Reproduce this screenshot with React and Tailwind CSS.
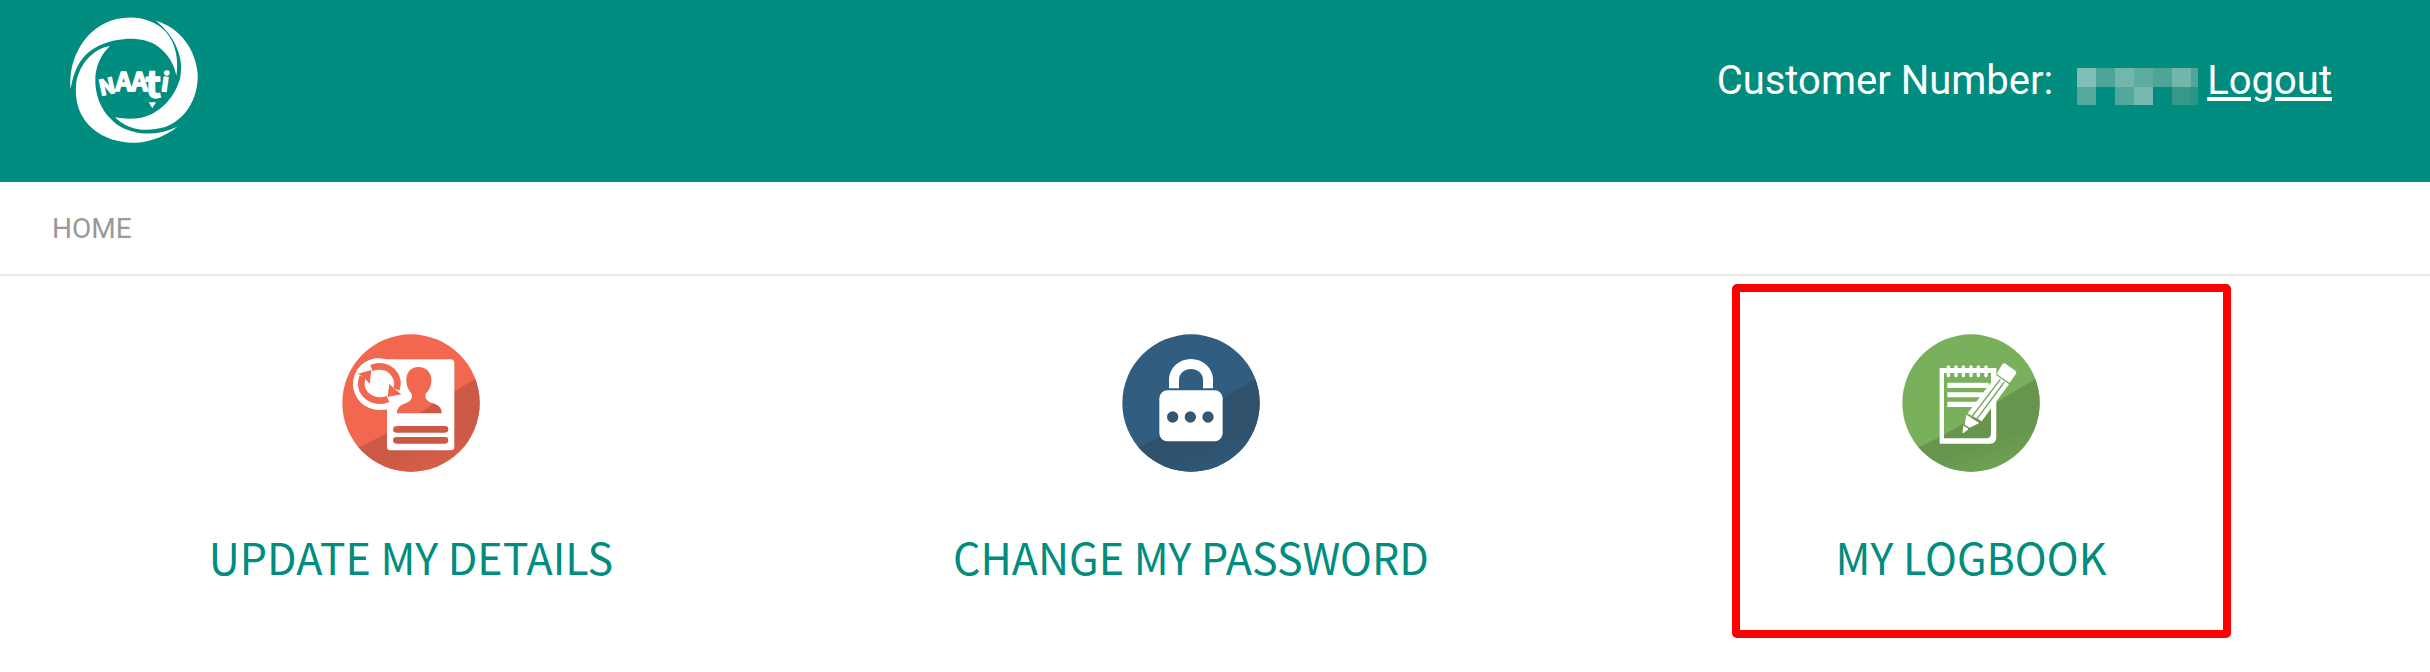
function Logo() {
  return (
    <svg viewBox="0 0 510 510" className="size-[170px]" role="img" aria-label="NAATI" fill="#fff">
      <path d="M62 268C54 190 92 108 160 72C222 40 302 48 346 94C380 132 386 184 379 228C374 196 356 164 326 141C298 120 262 115 226 117C180 121 138 134 106 166C78 196 68 232 62 268Z" />
      <path d="M318 62C392 84 438 150 443 222C446 300 402 362 342 382C304 393 262 391 238 380C220 373 206 364 195 352C222 357 250 357 274 353C330 340 374 292 390 236C404 172 374 108 318 62Z" />
      <path d="M180 138C130 146 90 190 79 246C72 302 88 354 130 388C166 418 214 430 258 428C306 425 350 406 382 380C340 400 292 406 254 396C222 388 200 376 186 360C152 330 134 284 136 232C138 196 154 162 180 138Z" />
      <g
        fontFamily="'Noto Sans CJK SC', sans-serif"
        fontWeight="700"
        textAnchor="middle"
        stroke="#fff"
        strokeWidth="4"
      >
        <text x="176" y="282" fontSize="64" transform="rotate(-12 176 282)">N</text>
        <text x="221" y="272" fontSize="78">A</text>
        <text x="268" y="272" fontSize="78">A</text>
        <text x="309" y="294" fontSize="112">t</text>
        <text x="342" y="274" fontSize="76" transform="rotate(8 342 274)">i</text>
      </g>
      <path d="M296 307L318 307L307 325Z" />
    </svg>
  );
}

function Disc({ id, base, shade, end, children }) {
  return (
    <svg viewBox="36 26 414 414" className="size-[138px]" aria-hidden="true">
      <defs>
        <clipPath id={id}>
          <circle cx="243" cy="233" r="206" />
        </clipPath>
        <linearGradient id={id + "-g"} x1="0" y1="0" x2="0.45" y2="1">
          <stop offset="0.75" stopColor={shade} />
          <stop offset="1" stopColor={end} />
        </linearGradient>
      </defs>
      <circle cx="243" cy="233" r="206" fill={base} />
      <path
        clipPath={`url(#${id})`}
        d="M70 373Q160 333 243 280Q330 222 460 147V460H70Z"
        fill={`url(#${id}-g)`}
      />
      {children}
    </svg>
  );
}

function DetailsIcon() {
  return (
    <Disc id="details" base="#f1674f" shade="#cb5945" end="#d85f49">
      <path
        fillRule="evenodd"
        fill="#fff"
        d="M150 102H362Q373 102 373 113V365Q373 375 362 375H181Q171 375 171 365V253H146A77 77 0 0 1 146 99ZM265 125C242 125 229 142 229 164C229 182 236 196 245 205C248 222 240 228 228 233C208 240 200 250 201 264H335C336 250 328 240 308 233C292 228 284 220 287 205C297 196 304 182 304 164C304 142 290 125 265 125ZM199 302A10 10 0 0 0 199 322H345A10 10 0 0 0 345 302ZM199 335A10 10 0 0 0 199 355H345A10 10 0 0 0 345 335Z"
      />
      <circle cx="147" cy="176" r="77" fill="#fff" />
      <g fill="none" stroke="#f1674f" strokeWidth="20">
        <path d="M124 128C150 118 178 124 193 146C203 160 204 178 199 192" />
        <path d="M174 221C148 232 118 224 103 203C92 188 92 170 98 154" />
      </g>
      <path d="M84 145L124 134L119 176L104 158Z" fill="#f1674f" />
      <path d="M214 207L173 215L178 176L193 190Z" fill="#f1674f" />
    </Disc>
  );
}

function LockIcon() {
  return (
    <Disc id="lock" base="#315d80" shade="#2f516c" end="#30587a">
      <path d="M177 189V163A66 62 0 0 1 309 163V189H279V163A36 32 0 0 0 207 163V189Z" fill="#fff" />
      <rect x="148" y="195" width="190" height="153" rx="24" fill="#fff" />
      <g fill="#315775">
        <circle cx="188" cy="275" r="17" />
        <circle cx="241" cy="275" r="17" />
        <circle cx="294" cy="275" r="17" />
      </g>
    </Disc>
  );
}

function LogbookIcon() {
  return (
    <Disc id="logbook" base="#78b05b" shade="#67954d" end="#6fa354">
      <path
        fillRule="evenodd"
        fill="#fff"
        d="M149 128H319V336Q319 355 300 355H149ZM162 143V339H289Q303 339 303 324V143Z"
      />
      <g stroke="#fff" strokeWidth="10" strokeLinecap="round">
        <path d="M175 125V151M198 125V151M220 125V151M243 125V151M265 125V151M288 125V151" />
      </g>
      <path d="M172 172H296V188H172ZM172 201H280V216H172ZM172 229H262V245H172Z" fill="#fff" />
      <path d="M338 115Q342 112 347 115L376 136Q381 140 378 145L359 172L324 149Q320 146 322 141Z" fill="#fff" />
      <path d="M319 150L357 177L275 288L233 264Z" fill="#fff" />
      <path d="M331 162L245 275M343 170L259 283" stroke="#78a45f" strokeWidth="4" />
      <path d="M229 268L268 293L239 307L224 298Z" fill="#fff" />
      <path d="M221 303L234 311L219 323Z" fill="#fff" stroke="#fff" strokeWidth="3" />
    </Disc>
  );
}

const mosaic = [
  ["bg-[#80beb6]", "bg-[#52a99c]"],
  ["bg-[#4da599]", "bg-transparent"],
  ["bg-[#73b7ac]", "bg-[#52a89b]"],
  ["bg-[#5eada1]", "bg-[#76baaf]"],
  ["bg-[#4da598]", "bg-transparent"],
  ["bg-[#72b6ab]", "bg-[#35998a]"],
];

function RedactedNumber() {
  return (
    <span className="flex" role="img" aria-label="Hidden customer number">
      {mosaic.map(([top, bottom], i) => (
        <span key={i} className="flex flex-col">
          <span className={`h-[19px] w-[19px] ${top}`} />
          <span className={`h-[18px] w-[19px] ${bottom}`} />
        </span>
      ))}
      <span className="flex flex-col">
        <span className="h-[19px] w-[7px] bg-[#4ea598]" />
        <span className="h-[18px] w-[7px] bg-[#2c9485]" />
      </span>
    </span>
  );
}

function Tile({ icon, label, highlighted }) {
  return (
    <li className="relative flex flex-1 flex-col items-center">
      <a href="#" className="flex flex-col items-center gap-[52px] pt-[58px]">
        {icon}
        <span className="text-[43px] leading-[64px] text-[#008c7e]">{label}</span>
      </a>
      {highlighted && (
        <span className="pointer-events-none absolute top-2 right-[130px] left-[151px] h-[354px] rounded-[5px] border-8 border-[#fe0000]" />
      )}
    </li>
  );
}

export default function App() {
  return (
    <div className="min-h-screen bg-white font-['Roboto',sans-serif]">
      <header className="flex h-[182px] items-start justify-between bg-[#008c7e] pr-[98px] pl-[50px] text-white">
        <a href="#">
          <Logo />
        </a>
        <div className="flex items-center pt-[57px] text-[40px] leading-[48px]">
          <span>Customer Number:</span>
          <span className="pr-[9px] pl-6 pt-[10px]">
            <RedactedNumber />
          </span>
          <a href="#" className="underline decoration-4 underline-offset-[3px]">
            Logout
          </a>
        </div>
      </header>
      <nav aria-label="Breadcrumb" className="border-b-2 border-[#e8ebea] px-[52px] pt-[27px] pb-[25px]">
        <a href="#" className="block text-[28px] leading-10 text-[#999]">
          HOME
        </a>
      </nav>
      <main>
        <ul className="flex pr-[69px] pl-[21px] font-['Noto_Sans_CJK_SC',sans-serif]">
          <Tile icon={<DetailsIcon />} label="UPDATE MY DETAILS" />
          <Tile icon={<LockIcon />} label="CHANGE MY PASSWORD" />
          <Tile icon={<LogbookIcon />} label="MY LOGBOOK" highlighted />
        </ul>
      </main>
    </div>
  );
}
